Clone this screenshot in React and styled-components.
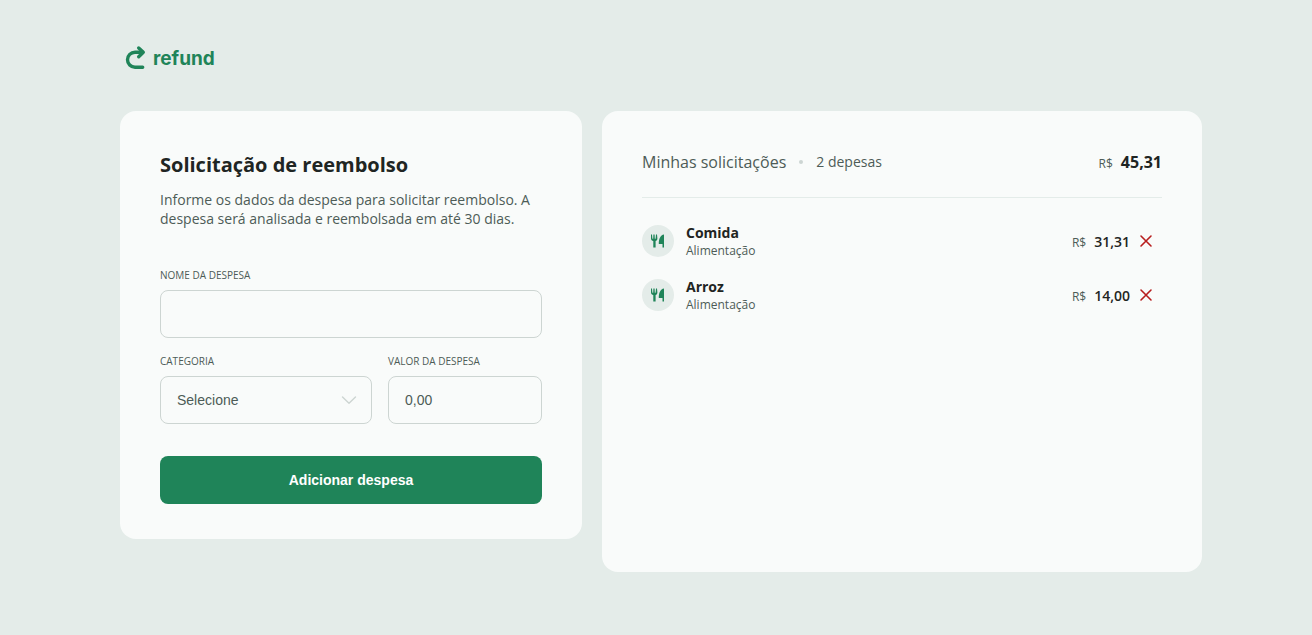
import React from "react";
import styled, { createGlobalStyle } from "styled-components";

const color = {
  page: "#e4ece9",
  card: "#f9fbfa",
  green: "#1f8459",
  text: "#4d5c57",
  dark: "#1f2523",
  border: "#cdd5d2",
  red: "#b81e1e",
};

const GlobalStyle = createGlobalStyle`
  * { box-sizing: border-box; margin: 0; padding: 0; }
  body {
    background: ${color.page};
    color: ${color.text};
    font-family: "Open Sans", sans-serif;
    font-size: 14px;
  }
  button, input, select { font-family: "Liberation Sans", Arial, sans-serif; font-size: 14px; }
`;

const Page = styled.div`
  padding: 0 110px 63px 120px;
`;

const Header = styled.header`
  height: 111px;
  padding: 7px 5px 0;
  display: flex;
  align-items: center;
`;

const Logo = styled.a`
  display: flex;
  align-items: center;
  gap: 7px;
  color: ${color.green};
  text-decoration: none;
  font: 700 19px/24px "Inter", sans-serif;
  svg { overflow: visible; }
`;

const Main = styled.main`
  display: grid;
  grid-template-columns: 462fr 600fr;
  gap: 20px;
  align-items: start;
`;

const Card = styled.section`
  background: ${color.card};
  border-radius: 16px;
  padding: 40px 40px 35px;
  min-height: ${(p) => p.$minHeight || "0"};
`;

const Title = styled.h1`
  font-size: 20px;
  line-height: 28px;
  font-weight: 700;
  color: ${color.dark};
`;

const Intro = styled.p`
  margin-top: 11px;
  line-height: 19px;
`;

const Form = styled.form`
  margin-top: 40px;
  display: grid;
  grid-template-columns: 212fr 154fr;
  gap: 16px;
`;

const Field = styled.div`
  grid-column: ${(p) => (p.$wide ? "1 / -1" : "auto")};
  min-width: 0;
`;

const Label = styled.label`
  display: block;
  margin-bottom: 8px;
  font-size: 10px;
  line-height: 14px;
  text-transform: uppercase;
`;

const Input = styled.input`
  display: block;
  width: 100%;
  height: 48px;
  padding: 0 16px;
  border: 1px solid ${color.border};
  border-radius: 8px;
  background: transparent;
  color: ${color.text};
  &::placeholder { color: ${color.text}; opacity: 1; }
`;

const SelectBox = styled.div`
  display: grid;
  align-items: center;
  > * { grid-area: 1 / 1; }
  svg { justify-self: end; margin-right: 15px; pointer-events: none; }
`;

const Select = styled(Input).attrs({ as: "select" })`
  appearance: none;
`;

const Submit = styled.button`
  grid-column: 1 / -1;
  height: 48px;
  margin-top: 16px;
  border: 0;
  border-radius: 8px;
  background: ${color.green};
  color: #fff;
  font-weight: 700;
  cursor: pointer;
`;

const Summary = styled.header`
  display: flex;
  align-items: center;
  padding-bottom: 24px;
  border-bottom: 1px solid ${color.page};
  line-height: 22px;
`;

const SummaryTitle = styled.h2`
  font-size: 16px;
  font-weight: 400;
`;

const Dot = styled.span`
  width: 4px;
  height: 4px;
  margin: 0 13px;
  border-radius: 50%;
  background: ${color.border};
`;

const Amount = styled.span`
  display: flex;
  align-items: baseline;
  gap: 8px;
  margin-left: auto;
  color: ${color.dark};
  font-size: ${(p) => (p.$total ? "16px" : "14px")};
  font-weight: ${(p) => (p.$total ? 700 : 600)};
  small { color: ${color.text}; font-size: 12px; line-height: 16px; font-weight: 400; }
`;

const List = styled.ul`
  list-style: none;
  padding: 25px 9px 0 0;
  display: flex;
  flex-direction: column;
  gap: 18px;
`;

const Expense = styled.li`
  display: flex;
  align-items: center;
`;

const Badge = styled.span`
  width: 32px;
  height: 32px;
  margin-right: 12px;
  border-radius: 50%;
  background: ${color.page};
  display: grid;
  place-items: center;
`;

const Name = styled.strong`
  display: block;
  line-height: 19px;
  color: ${color.dark};
`;

const Category = styled.span`
  display: block;
  font-size: 12px;
  line-height: 17px;
`;

const Remove = styled.button`
  margin-left: 9px;
  border: 0;
  background: none;
  cursor: pointer;
  svg { display: block; }
`;

const LogoIcon = () => (
  <svg width="21" height="24" viewBox="0 1 21 24" fill="none" stroke="currentColor" strokeWidth="3.4" strokeLinecap="round" strokeLinejoin="round" aria-hidden="true">
    <path d="M17.5 6.2H10a7.5 7.5 0 0 0 0 15h7.7" />
    <path d="M13.7 2l4.6 4.2-4.6 4.5" />
  </svg>
);

const FoodIcon = () => (
  <svg width="14" height="16" viewBox="0 0 14 16" fill={color.green} aria-hidden="true">
    <path d="M0 1.500h1l.4 4.300h.8l.2-4.300h1.200l.2 4.300h.8l.4-4.300h1l.4 4.100c0 1.500-.8 2.200-1.800 2.500v6.400H2.300V8.100C1 7.800 0 7 0 5.600z" />
    <path d="M13 1.500v13h-1.500v-3.600H7.800C7.600 6.500 9.300 2 13 1.500z" />
  </svg>
);

const expenses = [
  { name: "Comida", category: "Alimentação", value: "31,31" },
  { name: "Arroz", category: "Alimentação", value: "14,00" },
];

export default function App() {
  return (
    <>
      <GlobalStyle />
      <Page>
        <Header>
          <Logo href="#"><LogoIcon />refund</Logo>
        </Header>
        <Main>
          <Card>
            <Title>Solicitação de reembolso</Title>
            <Intro>
              Informe os dados da despesa para solicitar reembolso. A despesa será
              analisada e reembolsada em até 30 dias.
            </Intro>
            <Form onSubmit={(e) => e.preventDefault()}>
              <Field $wide>
                <Label htmlFor="expense">Nome da despesa</Label>
                <Input id="expense" type="text" />
              </Field>
              <Field>
                <Label htmlFor="category">Categoria</Label>
                <SelectBox>
                  <Select id="category" defaultValue="">
                    <option value="">Selecione</option>
                    <option value="food">Alimentação</option>
                  </Select>
                  <svg width="16" height="10" viewBox="0 0 16 10" fill="none" stroke={color.border} strokeWidth="1.4" strokeLinecap="round" strokeLinejoin="round" aria-hidden="true">
                    <path d="M1.500 2L8 8.300 14.500 2" />
                  </svg>
                </SelectBox>
              </Field>
              <Field>
                <Label htmlFor="amount">Valor da despesa</Label>
                <Input id="amount" type="text" placeholder="0,00" />
              </Field>
              <Submit type="submit">Adicionar despesa</Submit>
            </Form>
          </Card>
          <Card $minHeight="461px">
            <Summary>
              <SummaryTitle>Minhas solicitações</SummaryTitle>
              <Dot />
              <span>2 depesas</span>
              <Amount $total><small>R$</small>45,31</Amount>
            </Summary>
            <List>
              {expenses.map((e) => (
                <Expense key={e.name}>
                  <Badge><FoodIcon /></Badge>
                  <div>
                    <Name>{e.name}</Name>
                    <Category>{e.category}</Category>
                  </div>
                  <Amount><small>R$</small>{e.value}</Amount>
                  <Remove type="button" aria-label={`Remover ${e.name}`}>
                    <svg width="14" height="14" viewBox="0 0 14 14" stroke={color.red} strokeWidth="1.6" strokeLinecap="round" aria-hidden="true">
                      <path d="M2 2l10 10M12 2L2 12" />
                    </svg>
                  </Remove>
                </Expense>
              ))}
            </List>
          </Card>
        </Main>
      </Page>
    </>
  );
}
